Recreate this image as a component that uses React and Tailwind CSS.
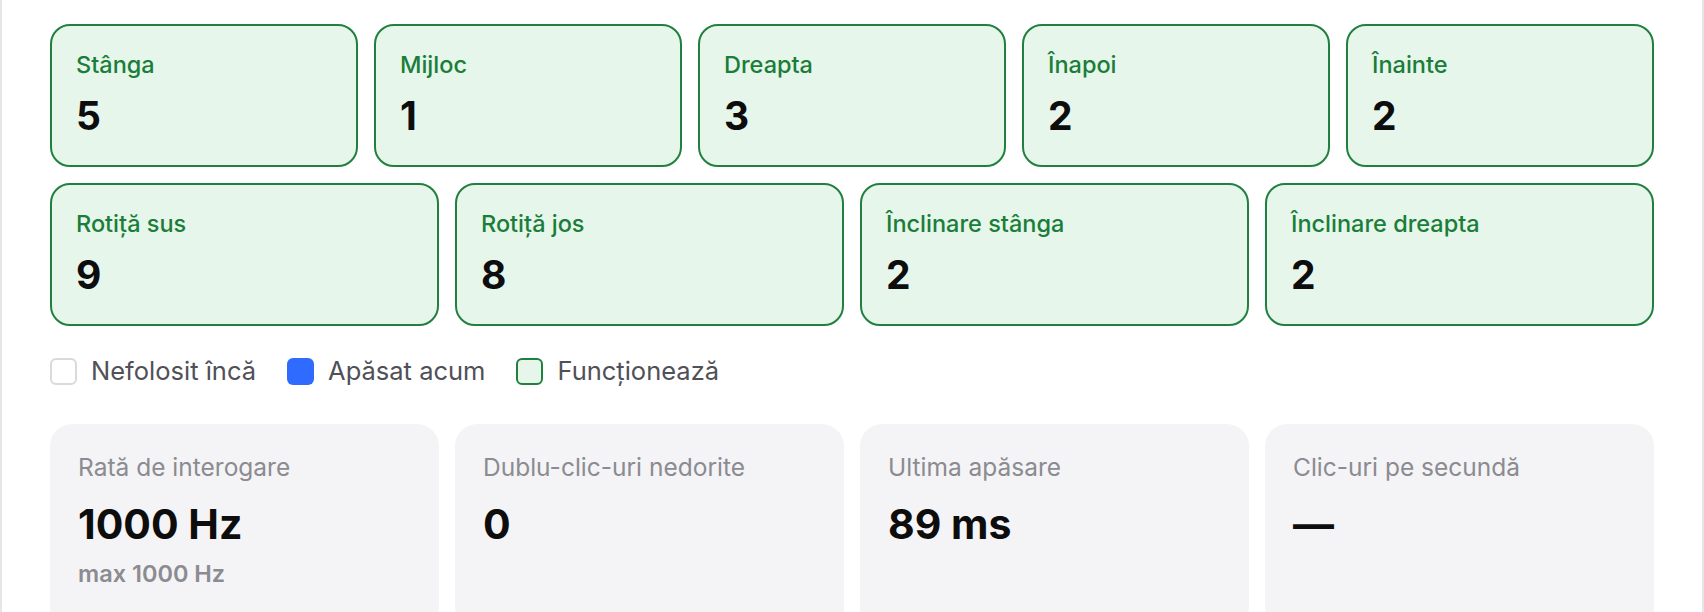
import React from "react";

const buttons = [
  { label: "Stânga", count: 5 },
  { label: "Mijloc", count: 1 },
  { label: "Dreapta", count: 3 },
  { label: "Înapoi", count: 2 },
  { label: "Înainte", count: 2 },
];

const wheel = [
  { label: "Rotiță sus", count: 9 },
  { label: "Rotiță jos", count: 8 },
  { label: "Înclinare stânga", count: 2 },
  { label: "Înclinare dreapta", count: 2 },
];

const stats = [
  { label: "Rată de interogare", value: "1000 Hz", sub: "max 1000 Hz" },
  { label: "Dublu-clic-uri nedorite", value: "0" },
  { label: "Ultima apăsare", value: "89 ms" },
  { label: "Clic-uri pe secundă", value: "—" },
];

const ButtonCard = ({ label, count }) => (
  <div className="rounded-[20px] border-2 border-[#21803f] bg-[#e6f6ea] px-6 pt-6 pb-[25px]">
    <div className="text-[23.5px] leading-[30px] font-medium text-[#1a7d39]">
      {label}
    </div>
    <div className="mt-3 text-[39px] leading-[48px] font-bold text-[#0d0d0d]">
      {count}
    </div>
  </div>
);

const LegendItem = ({ boxClass, children }) => (
  <div className="flex items-center gap-[14px]">
    <span className={`block h-[27px] w-[27px] rounded-[6px] ${boxClass}`}></span>
    <span className="text-[25.5px] leading-[32px] text-[#505058]">{children}</span>
  </div>
);

const StatCard = ({ label, value, sub }) => (
  <div className="rounded-[22px] bg-[#f4f4f6] p-7 pb-10">
    <div className="text-[24.5px] leading-[30px] text-[#8b8b91]">{label}</div>
    <div className="mt-[18px] text-[41px] leading-[48px] font-bold text-[#0d0d0d]">
      {value}
    </div>
    {sub && (
      <div className="mt-[11px] text-[23.5px] leading-[30px] font-semibold text-[#8b8b91]">
        {sub}
      </div>
    )}
  </div>
);

export default function App() {
  return (
    <div
      className="h-[612px] overflow-hidden bg-white"
      style={{ fontFamily: "Inter, 'Noto Sans', sans-serif" }}
    >
      <div className="min-h-[700px] border-x-2 border-[#e6e6e8] px-12 pt-6">
        <div className="grid grid-cols-5 gap-4">
          {buttons.map((b) => (
            <ButtonCard key={b.label} {...b} />
          ))}
        </div>
        <div className="mt-4 grid grid-cols-4 gap-4">
          {wheel.map((b) => (
            <ButtonCard key={b.label} {...b} />
          ))}
        </div>

        <div className="mt-[29px] flex items-center gap-[31px]">
          <LegendItem boxClass="border-2 border-[#d9d9de] bg-white">
            Nefolosit încă
          </LegendItem>
          <LegendItem boxClass="bg-[#2f6bff]">Apăsat acum</LegendItem>
          <LegendItem boxClass="border-2 border-[#21803f] bg-[#e6f6ea]">
            Funcționează
          </LegendItem>
        </div>

        <div className="mt-[37px] grid grid-cols-4 gap-4">
          {stats.map((s) => (
            <StatCard key={s.label} {...s} />
          ))}
        </div>
      </div>
    </div>
  );
}
